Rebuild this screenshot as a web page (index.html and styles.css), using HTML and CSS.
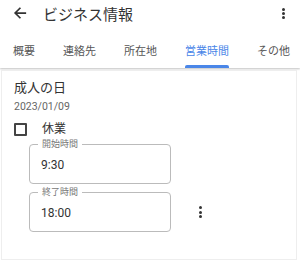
FILE: index.html
```html
<!DOCTYPE html>
<html lang="ja">
<head>
    <meta charset="UTF-8">
    <meta name="viewport" content="width=device-width, initial-scale=1.0">
    <title>ビジネス情報</title>
    <link rel="stylesheet" href="styles.css">
</head>
<body>

    <div class="header">
        <div class="toolbar">
            <svg class="back" width="14" height="14" viewBox="0 0 16 16">
                <path d="M15 8H2.5M8.5 2L2.5 8l6 6" fill="none" stroke="#333" stroke-width="2"/>
            </svg>
            <span class="title">ビジネス情報</span>
            <span class="more">
                <i></i><i></i><i></i>
            </span>
        </div>
        <div class="tabs">
            <div class="tab">概要</div>
            <div class="tab">連絡先</div>
            <div class="tab">所在地</div>
            <div class="tab active">営業時間</div>
            <div class="tab">その他</div>
        </div>
    </div>

    <div class="card">
        <div class="day-name">成人の日</div>
        <div class="day-date">2023/01/09</div>

        <label class="closed">
            <span class="box"></span>
            <span>休業</span>
        </label>

        <div class="row">
            <div class="fields">
                <div class="field">
                    <span class="legend">開始時間</span>
                    <span class="value">9:30</span>
                </div>
                <div class="field">
                    <span class="legend">終了時間</span>
                    <span class="value">18:00</span>
                </div>
            </div>
            <span class="more small">
                <i></i><i></i><i></i>
            </span>
        </div>
    </div>

</body>
</html>
```

FILE: styles.css
```css
body {
    margin: 0;
    font-family: Roboto, "Noto Sans CJK JP", sans-serif;
    background-color: #fff;
    color: #333;
}
.header {
    background-color: #fff;
    box-shadow: 0 1px 2px rgba(0, 0, 0, 0.25);
    height: 68px;
}
.toolbar {
    display: flex;
    align-items: center;
    height: 26px;
    padding: 0 15px 0 13px;
}
.back {
    margin-right: 16px;
}
.title {
    font-size: 15px;
    flex: 1;
}
.more {
    display: flex;
    flex-direction: column;
    gap: 1px;
}
.more i {
    width: 3px;
    height: 3px;
    border-radius: 50%;
    background-color: #333;
}
.tabs {
    display: flex;
    padding-left: 13px;
    gap: 28px;
}
.tab {
    font-size: 11px;
    color: #555;
    padding-top: 10px;
    line-height: 32px;
    white-space: nowrap;
    position: relative;
}
.tab.active {
    color: #4a86e8;
}
.tab.active::after {
    content: "";
    position: absolute;
    left: 0;
    right: 0;
    bottom: 0;
    height: 3px;
    border-radius: 2px 2px 0 0;
    background-color: #4a86e8;
}
.card {
    margin: 2px 3px 0 1px;
    border: 1px solid #eee;
    padding: 7px 12px 0;
    height: 181px;
}
.day-name {
    font-size: 13px;
    line-height: 20px;
}
.day-date {
    font-size: 10.5px;
    line-height: 16px;
    color: #666;
    margin-top: 1px;
}
.closed {
    display: flex;
    align-items: center;
    gap: 15px;
    margin-top: 7px;
    font-size: 12px;
    line-height: 14px;
}
.box {
    width: 9px;
    height: 9px;
    border: 2px solid #444;
    border-radius: 1px;
}
.row {
    display: flex;
    align-items: flex-end;
    gap: 28px;
}
.fields {
    display: flex;
    flex-direction: column;
    gap: 8px;
    margin-left: 15px;
    margin-top: 8px;
}
.field {
    position: relative;
    width: 142px;
    height: 40px;
    border: 1px solid #bbb;
    border-radius: 4px;
    display: flex;
    align-items: center;
    padding-left: 11px;
    box-sizing: border-box;
}
.legend {
    position: absolute;
    top: -6px;
    left: 8px;
    padding: 0 4px;
    background-color: #fff;
    font-size: 9px;
    color: #777;
    line-height: 11px;
}
.value {
    font-size: 12px;
    margin-top: 1px;
}
.more.small {
    gap: 1.5px;
    margin-bottom: 14px;
}
```
